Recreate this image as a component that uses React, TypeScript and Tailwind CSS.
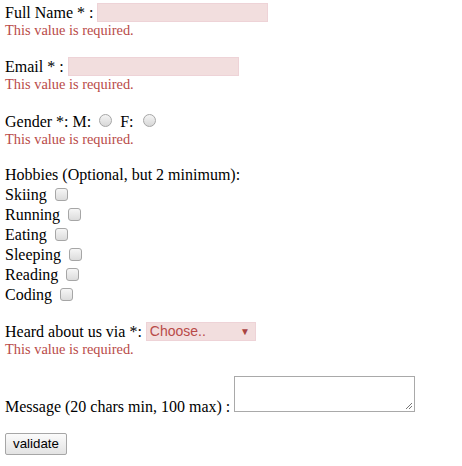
import React from 'react';

const serif = "font-['Liberation_Serif','Times_New_Roman',serif]";
const sans = "font-['Liberation_Sans',Arial,sans-serif]";

const ErrorText: React.FC = () => (
  <div className={`${serif} text-[14.4px] leading-[17px] text-[#B94A48]`}>This value is required.</div>
);

const Radio: React.FC = () => (
  <span className="inline-block w-[13px] h-[13px] rounded-full border border-[#a6a6a6] bg-gradient-to-b from-[#f4f4f4] to-[#d8d8d8]" />
);

const Checkbox: React.FC = () => (
  <span className="inline-block w-[13px] h-[13px] rounded-[3px] border border-[#a6a6a6] bg-gradient-to-b from-[#f6f6f6] to-[#dcdcdc]" />
);

const hobbies = ['Skiing', 'Running', 'Eating', 'Sleeping', 'Reading', 'Coding'];

export default function App() {
  return (
    <div className={`${serif} text-[16px] text-black bg-white w-[462px] h-[466px] pl-[5px] pt-[3px]`}>
      {/* Full name */}
      <div className="flex items-center h-[19px]">
        <span>Full Name * :</span>
        <span className="ml-[4px] w-[171px] h-[19px] bg-[#F2DEDE] border border-[#EED3D7]" />
      </div>
      <ErrorText />

      {/* Email */}
      <div className="flex items-center h-[19px] mt-[18px]">
        <span>Email * :</span>
        <span className="ml-[4px] w-[171px] h-[19px] bg-[#F2DEDE] border border-[#EED3D7]" />
      </div>
      <ErrorText />

      {/* Gender */}
      <div className="flex items-center h-[19px] mt-[19px]">
        <span>Gender *: M:</span>
        <span className="ml-[8px]"><Radio /></span>
        <span className="ml-[8px]">F:</span>
        <span className="ml-[9px]"><Radio /></span>
      </div>
      <ErrorText />

      {/* Hobbies */}
      <div className="mt-[17px] leading-[20px]">
        <div>Hobbies (Optional, but 2 minimum):</div>
        {hobbies.map(h => (
          <div key={h} className="flex items-center h-[20px]">
            <span>{h}</span>
            <span className="ml-[8px] -mt-[2px] flex"><Checkbox /></span>
          </div>
        ))}
      </div>

      {/* Heard about */}
      <div className="flex items-center h-[19px] mt-[17px]">
        <span>Heard about us via *:</span>
        <span className={`${sans} ml-[4px] w-[110px] h-[19px] bg-[#F2DEDE] border border-[#EED3D7] text-[#B94A48] text-[14px] flex items-center justify-between pl-[3px] pr-[5px]`}>
          <span>Choose..</span>
          <span className="text-[10px] text-[#a94442]">▼</span>
        </span>
      </div>
      <ErrorText />

      {/* Message */}
      <div className="flex items-end mt-[18px]">
        <span className="leading-[18px] mb-[-4px]">Message (20 chars min, 100 max) :</span>
        <span className="relative ml-[4px] w-[181px] h-[36px] border border-[#a9a9a9] bg-white">
          <svg className="absolute right-[1px] bottom-[1px]" width="8" height="8" viewBox="0 0 8 8">
            <path d="M7 1L1 7M7 4L4 7" stroke="#777" strokeWidth="1" />
          </svg>
        </span>
      </div>

      {/* Button */}
      <div className="mt-[21px]">
        <button className={`${sans} text-[13.3px] text-black h-[22px] w-[62px] border border-[#a6a6a6] rounded-[2px] bg-gradient-to-b from-[#fbfbfb] to-[#e3e3e3] flex items-center justify-center`}>
          validate
        </button>
      </div>
    </div>
  );
}
